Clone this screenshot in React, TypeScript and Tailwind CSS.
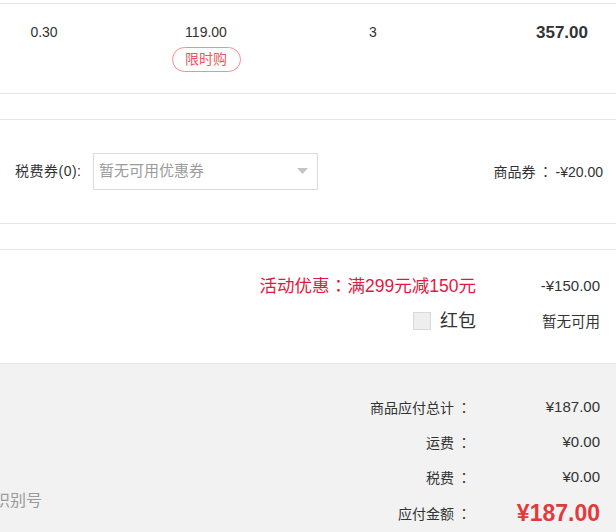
import React from "react";

const font = { fontFamily: '"Liberation Sans", "Noto Sans CJK SC", sans-serif' };

function Colon({ w }: { w: string }) {
  return (
    <span className={`inline-block text-center ${w}`} style={{ fontFamily: '"Noto Sans CJK JP", sans-serif' }}>
      ：
    </span>
  );
}

export default function App() {
  return (
    <div className="w-[616px] h-[532px] overflow-hidden bg-white text-[#333]" style={font}>
      <div className="h-[3px]" />
      {/* product row */}
      <div className="flex h-[91px] border-y border-[#e6e6e6] text-[14px]">
        <div className="w-[88px] text-center pt-[18px] leading-[20px]">0.30</div>
        <div className="w-[236px] flex flex-col items-center pt-[18px]">
          <div className="leading-[20px]">119.00</div>
          <div className="mt-[5px] h-[25px] w-[69px] rounded-full border-[1.5px] border-[#ff8b8b] text-[#f2555f] text-[14px] leading-[22px] text-center">
            限时购
          </div>
        </div>
        <div className="w-[98px] text-center pt-[18px] leading-[20px]">3</div>
        <div className="flex-1 text-right pr-[28px] pt-[18px] leading-[22px] text-[17px] font-bold">357.00</div>
      </div>
      <div className="h-[25px]" />
      {/* coupon row */}
      <div className="flex items-center h-[105px] border-y border-[#e6e6e6] text-[14px]">
        <div className="pl-[15px] w-[93px] tracking-[0.5px]">税费券(0):</div>
        <div className="w-[225px] h-[37px] border border-[#dcdcdc] flex items-center pl-[5px] pr-[9px]">
          <span className="flex-1 text-[15px] text-[#9b9b9b]">暂无可用优惠券</span>
          <svg width="11" height="7" viewBox="0 0 11 7">
            <path d="M0 0 L11 0 L5.5 6 Z" fill="#c4c4c4" />
          </svg>
        </div>
        <div className="flex-1 text-right pr-[13px]">
          商品券<Colon w="w-[20px]" />-¥20.00
        </div>
      </div>
      <div className="h-[25px]" />
      {/* discounts */}
      <div className="h-[114px] border-t border-[#e6e6e6] pr-[16px] pt-[24px]">
        <div className="flex justify-end items-center h-[24px]">
          <div className="text-[17.5px] text-[#e5173f]">
            活动优惠<Colon w="w-[18px]" />满299元减150元
          </div>
          <div className="w-[124px] text-right text-[15px]">-¥150.00</div>
        </div>
        <div className="flex justify-end items-center h-[24px] mt-[11px]">
          <div className="flex items-center">
            <div className="w-[18px] h-[18px] bg-[#eeeeee] border border-[#d8d8d8]" />
            <span className="ml-[9px] text-[18px] leading-[24px]">红包</span>
          </div>
          <div className="w-[124px] text-right text-[14.5px] pt-[3px]">暂无可用</div>
        </div>
      </div>
      {/* totals */}
      <div className="flex bg-[#f2f2f2] h-[170px] border-t border-[#e9e9e9]">
        <div className="flex-1 flex flex-col justify-start pt-[125px]">
          <div className="w-[42px] overflow-hidden flex justify-end">
            <span className="whitespace-nowrap text-[16px] text-[#9a9a9a] leading-[24px]">纳税人识别号</span>
          </div>
        </div>
        <div className="pr-[16px] pt-[26px] text-[14px]">
          <div className="flex justify-end items-center h-[35px]">
            <div className="text-right">商品应付总计<Colon w="w-[20px]" /></div>
            <div className="w-[126px] text-right text-[15px]">¥187.00</div>
          </div>
          <div className="flex justify-end items-center h-[35px]">
            <div className="text-right">运费<Colon w="w-[20px]" /></div>
            <div className="w-[126px] text-right text-[15px]">¥0.00</div>
          </div>
          <div className="flex justify-end items-center h-[35px]">
            <div className="text-right">税费<Colon w="w-[20px]" /></div>
            <div className="w-[126px] text-right text-[15px]">¥0.00</div>
          </div>
          <div className="flex justify-end items-center h-[37px]">
            <div className="text-right">应付金额<Colon w="w-[20px]" /></div>
            <div className="w-[126px] text-right text-[23px] font-bold text-[#e4393c]">¥187.00</div>
          </div>
        </div>
      </div>
    </div>
  );
}
